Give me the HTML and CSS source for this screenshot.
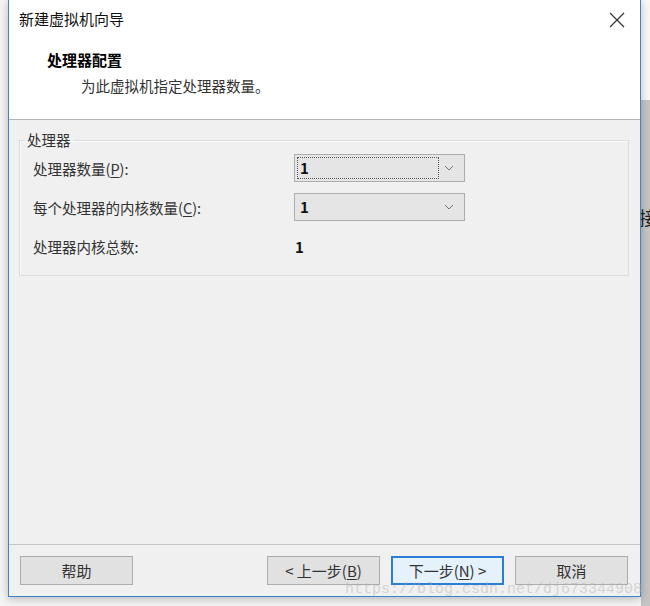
FILE: index.html
```html
<!DOCTYPE html>
<html lang="zh-CN">
<head>
  <meta charset="UTF-8">
  <title>新建虚拟机向导</title>
  <link rel="stylesheet" href="styles.css">
</head>
<body>

  <!-- Wizard dialog -->
  <div class="dialog">
    <div class="titlebar">
      <span class="title">新建虚拟机向导</span>
      <svg class="close" width="16" height="16" viewBox="0 0 16 16">
        <path d="M1 1 L15 15 M15 1 L1 15" stroke="#333" stroke-width="1.2" fill="none"/>
      </svg>
    </div>

    <div class="header">
      <div class="header-title">处理器配置</div>
      <div class="header-sub">为此虚拟机指定处理器数量。</div>
    </div>

    <div class="content">
      <fieldset class="group">
        <legend>处理器</legend>
        <div class="rows">
          <div class="label">处理器数量(<u>P</u>):</div>
          <div class="combo">
            <span class="combo-value focused">1</span>
            <svg class="chevron" width="10" height="6" viewBox="0 0 10 6"><path d="M1 1 L5 5 L9 1" stroke="#777" fill="none"/></svg>
          </div>

          <div class="label">每个处理器的内核数量(<u>C</u>):</div>
          <div class="combo">
            <span class="combo-value">1</span>
            <svg class="chevron" width="10" height="6" viewBox="0 0 10 6"><path d="M1 1 L5 5 L9 1" stroke="#777" fill="none"/></svg>
          </div>

          <div class="label">处理器内核总数:</div>
          <div class="value">1</div>
        </div>
      </fieldset>
    </div>

    <div class="footer">
      <button class="btn">帮助</button>
      <div class="nav">
        <button class="btn">&lt; 上一步(<u>B</u>)</button>
        <button class="btn default">下一步(<u>N</u>) &gt;</button>
        <button class="btn">取消</button>
      </div>
    </div>

    <div class="watermark">https://blog.csdn.net/dj673344908</div>
  </div>

  <!-- Window behind the dialog -->
  <div class="behind">
    <div class="behind-top"></div>
    <div class="behind-body"><span class="behind-text">接</span></div>
  </div>

</body>
</html>
```

FILE: styles.css
```css
body {
  margin: 0;
  padding: 0;
  width: 650px;
  height: 606px;
  overflow: hidden;
  display: flex;
  background: #f4f4f4;
  font-family: "Noto Sans CJK SC", "Liberation Sans", sans-serif;
  color: #222;
}

.dialog {
  position: relative;
  margin-left: 8px;
  width: 631px;
  height: 596px;
  border: 1px solid #3c84cc;
  border-top: none;
  background: #f0f0f0;
  display: flex;
  flex-direction: column;
  box-shadow: 0 2px 8px rgba(0, 0, 0, 0.25);
}

.titlebar {
  height: 38px;
  background: #fff;
  display: flex;
  align-items: center;
  justify-content: space-between;
  padding: 0 15px 0 10px;
}

.title {
  font-size: 15px;
  line-height: 20px;
  color: #111;
}

.close {
  margin-top: 1px;
}

.header {
  height: 82px;
  background: #fff;
  border-bottom: 1px solid #b4b4b4;
  padding-left: 38px;
  box-sizing: border-box;
}

.header-title {
  margin-top: 12px;
  font-size: 15px;
  line-height: 20px;
  font-weight: bold;
  color: #000;
}

.header-sub {
  margin-top: 6px;
  padding-left: 34px;
  font-size: 14.5px;
  line-height: 20px;
  color: #333;
}

.content {
  flex: 1;
  padding: 10px 11px 0 10px;
}

.group {
  margin: 0;
  padding: 4px 0 15px 13px;
  border: 1px solid #dcdcdc;
  box-shadow: inset 1px 1px 0 #fafafa;
}

.group legend {
  margin-left: -8px;
  padding: 0 2px;
  font-size: 14.5px;
  line-height: 20px;
  color: #333;
}

.rows {
  display: grid;
  grid-template-columns: 261px 171px;
  grid-auto-rows: 28px;
  row-gap: 11px;
  align-items: center;
}

.label {
  font-size: 14.5px;
  color: #333;
}

.label u {
  text-underline-offset: 2px;
}

.combo {
  height: 28px;
  box-sizing: border-box;
  border: 1px solid #adadad;
  background: #e5e5e5;
  display: flex;
  align-items: center;
  justify-content: space-between;
  padding: 0 10px 0 2px;
}

.combo-value {
  font-size: 15px;
  font-weight: bold;
  line-height: 20px;
  padding: 0 2px;
  color: #111;
  flex: 0 0 142px;
  box-sizing: border-box;
  border: 1px dotted transparent;
}

.combo-value.focused {
  border-color: #555;
}

.value {
  padding-left: 1px;
  font-size: 15px;
  font-weight: bold;
  color: #111;
}

.footer {
  height: 52px;
  border-top: 1px solid #c5c5c5;
  display: flex;
  align-items: center;
  justify-content: space-between;
  padding: 0 12px 0 11px;
  box-sizing: border-box;
}

.nav {
  display: flex;
  gap: 11px;
}

.btn {
  width: 113px;
  height: 29px;
  background: #e1e1e1;
  border: 1px solid #adadad;
  font-family: "Noto Sans CJK SC", "Liberation Sans", sans-serif;
  font-size: 15px;
  color: #333;
  padding: 0;
}

.btn.default {
  border: 2px solid #2a7fd4;
  background: #e5f1fb;
}

.btn u {
  text-underline-offset: 2px;
}

.watermark {
  position: absolute;
  right: -2px;
  bottom: -2px;
  font-family: "Liberation Mono", monospace;
  font-size: 15px;
  color: rgba(175, 175, 175, 0.45);
  pointer-events: none;
}

.behind {
  flex: 1;
  display: flex;
  flex-direction: column;
  overflow: hidden;
}

.behind-top {
  height: 100px;
  background: #f7f7f7;
}

.behind-body {
  flex: 1;
  background: #c4c4c4;
  padding-top: 106px;
}

.behind-text {
  font-size: 18px;
  line-height: 22px;
  color: #222;
  white-space: nowrap;
  margin-left: -2px;
  display: block;
}
```
